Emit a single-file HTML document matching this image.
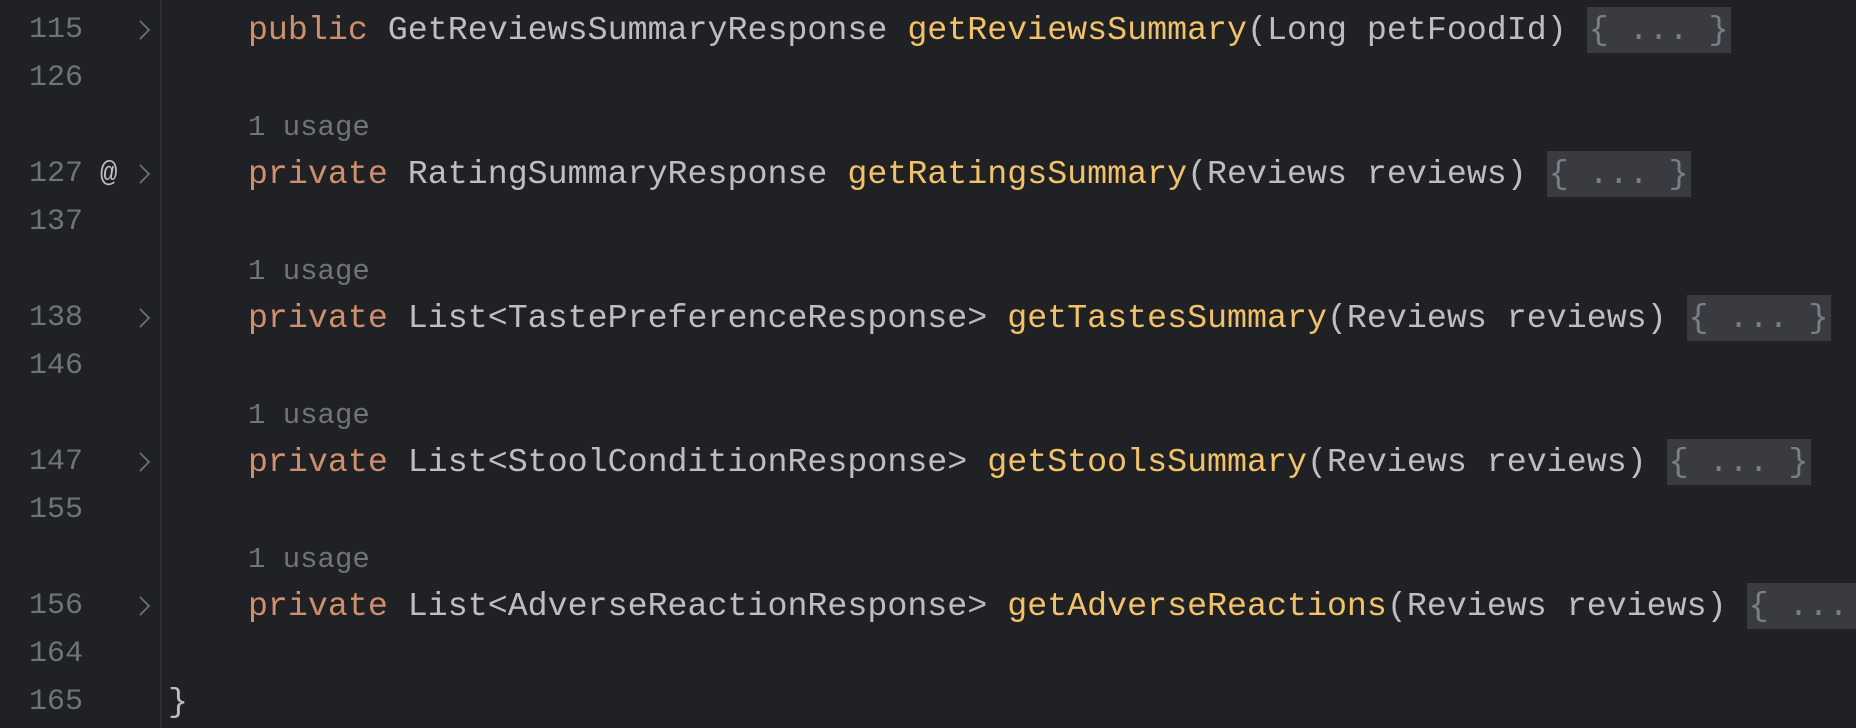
<!DOCTYPE html>
<html><head><meta charset="utf-8"><style>
html,body{margin:0;padding:0;background:#202124;width:1856px;height:728px;overflow:hidden}
body{font-family:"Liberation Mono",monospace;font-size:33.3px;color:#bcbec4;position:relative}
.row{position:absolute;left:0;height:48px;line-height:48px;width:1856px;white-space:pre}
.ln{position:absolute;right:1773px;color:#6f737a;font-size:30px}
.code{position:absolute;left:168px}
.k{color:#cf8e6d}.m{color:#f2c26b}.u{color:#6f737a;font-size:29px}
.f{background:#393b40;color:#7a7e85;padding:4px 2px}
.chev{position:absolute;left:138px;top:13px;width:13px;height:22px}
.at{position:absolute;left:100px;color:#bcbec4;font-size:29px}
.vl{position:absolute;left:160px;top:0;width:2px;height:728px;background:#2e3034}
</style></head><body>
<div class="vl"></div>
<div class="row" style="top:6px"><span class="ln">115</span><svg class="chev" viewBox="0 0 13 22"><path d="M2 2l9 9-9 9" fill="none" stroke="#6f737a" stroke-width="1.6"/></svg><span class="code">    <span class="k">public</span> GetReviewsSummaryResponse <span class="m">getReviewsSummary</span>(Long petFoodId) <span class="f">{ ... }</span></span></div>
<div class="row" style="top:54px"><span class="ln">126</span></div>
<div class="row" style="top:102px"><span class="code">    <span class="u">1 usage</span></span></div>
<div class="row" style="top:150px"><span class="ln">127</span><span class="at">@</span><svg class="chev" viewBox="0 0 13 22"><path d="M2 2l9 9-9 9" fill="none" stroke="#6f737a" stroke-width="1.6"/></svg><span class="code">    <span class="k">private</span> RatingSummaryResponse <span class="m">getRatingsSummary</span>(Reviews reviews) <span class="f">{ ... }</span></span></div>
<div class="row" style="top:198px"><span class="ln">137</span></div>
<div class="row" style="top:246px"><span class="code">    <span class="u">1 usage</span></span></div>
<div class="row" style="top:294px"><span class="ln">138</span><svg class="chev" viewBox="0 0 13 22"><path d="M2 2l9 9-9 9" fill="none" stroke="#6f737a" stroke-width="1.6"/></svg><span class="code">    <span class="k">private</span> List&lt;TastePreferenceResponse&gt; <span class="m">getTastesSummary</span>(Reviews reviews) <span class="f">{ ... }</span></span></div>
<div class="row" style="top:342px"><span class="ln">146</span></div>
<div class="row" style="top:390px"><span class="code">    <span class="u">1 usage</span></span></div>
<div class="row" style="top:438px"><span class="ln">147</span><svg class="chev" viewBox="0 0 13 22"><path d="M2 2l9 9-9 9" fill="none" stroke="#6f737a" stroke-width="1.6"/></svg><span class="code">    <span class="k">private</span> List&lt;StoolConditionResponse&gt; <span class="m">getStoolsSummary</span>(Reviews reviews) <span class="f">{ ... }</span></span></div>
<div class="row" style="top:486px"><span class="ln">155</span></div>
<div class="row" style="top:534px"><span class="code">    <span class="u">1 usage</span></span></div>
<div class="row" style="top:582px"><span class="ln">156</span><svg class="chev" viewBox="0 0 13 22"><path d="M2 2l9 9-9 9" fill="none" stroke="#6f737a" stroke-width="1.6"/></svg><span class="code">    <span class="k">private</span> List&lt;AdverseReactionResponse&gt; <span class="m">getAdverseReactions</span>(Reviews reviews) <span class="f">{ ... }</span></span></div>
<div class="row" style="top:630px"><span class="ln">164</span></div>
<div class="row" style="top:678px"><span class="ln">165</span><span class="code">}</span></div>
</body></html>
